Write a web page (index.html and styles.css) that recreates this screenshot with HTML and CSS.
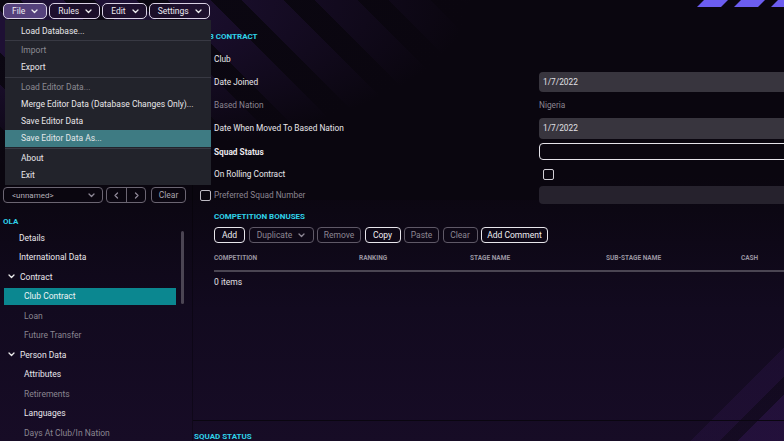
FILE: index.html
```html
<!DOCTYPE html>
<html lang="en">
<head>
<meta charset="utf-8">
<title>Editor - Club Contract</title>
<link rel="stylesheet" href="styles.css">
</head>
<body>
<div class="app">
  <header class="topbar">
    <nav class="menubar">
      <button class="mbtn active">File <svg class="chev" width="7" height="5" viewBox="0 0 7 5"><path d="M1 1l2.5 2.5L6 1"/></svg></button>
      <button class="mbtn">Rules <svg class="chev" width="7" height="5" viewBox="0 0 7 5"><path d="M1 1l2.5 2.5L6 1"/></svg></button>
      <button class="mbtn">Edit <svg class="chev" width="7" height="5" viewBox="0 0 7 5"><path d="M1 1l2.5 2.5L6 1"/></svg></button>
      <button class="mbtn">Settings <svg class="chev" width="7" height="5" viewBox="0 0 7 5"><path d="M1 1l2.5 2.5L6 1"/></svg></button>
    </nav>
    <svg class="stripes" width="87" height="8" viewBox="0 0 87 8">
      <polygon points="7,0 31,0 24,7 0,7"/>
      <polygon points="44,0 68,0 61,7 37,7"/>
      <polygon points="81,0 105,0 98,7 74,7"/>
    </svg>
  </header>

  <div class="dropdown">
    <div class="mi">Load Database...</div>
    <div class="sep first"></div>
    <div class="mi disabled">Import</div>
    <div class="mi">Export</div>
    <div class="sep"></div>
    <div class="mi disabled">Load Editor Data...</div>
    <div class="mi">Merge Editor Data (Database Changes Only)...</div>
    <div class="mi">Save Editor Data</div>
    <div class="mi hl">Save Editor Data As...</div>
    <div class="sep"></div>
    <div class="mi">About</div>
    <div class="mi">Exit</div>
  </div>

  <div class="main">
    <aside class="sidebar">
      <div class="selector">
        <div class="combo"><span>&lt;unnamed&gt;</span><svg class="chev dim" width="7" height="5" viewBox="0 0 7 5"><path d="M1 1l2.5 2.5L6 1"/></svg></div>
        <div class="navgroup">
          <span class="nb"><svg class="chev dim" width="5" height="7" viewBox="0 0 5 7"><path d="M3.5 1L1 3.5 3.5 6"/></svg></span>
          <span class="nb"><svg class="chev dim" width="5" height="7" viewBox="0 0 5 7"><path d="M1.5 1L4 3.5 1.5 6"/></svg></span>
        </div>
        <div class="sbtn">Clear</div>
      </div>
      <div class="person">OLA</div>
      <div class="treewrap">
        <ul class="tree">
          <li class="ti l1">Details</li>
          <li class="ti l1">International Data</li>
          <li class="ti l1 group"><svg class="chev" width="7" height="5" viewBox="0 0 7 5"><path d="M1 1l2.5 2.5L6 1"/></svg>Contract</li>
          <li class="ti l2 selected">Club Contract</li>
          <li class="ti l2 off">Loan</li>
          <li class="ti l2 off">Future Transfer</li>
          <li class="ti l1 group"><svg class="chev" width="7" height="5" viewBox="0 0 7 5"><path d="M1 1l2.5 2.5L6 1"/></svg>Person Data</li>
          <li class="ti l2">Attributes</li>
          <li class="ti l2 off">Retirements</li>
          <li class="ti l2">Languages</li>
          <li class="ti l2 off">Days At Club/In Nation</li>
        </ul>
        <div class="scroll"></div>
      </div>
    </aside>

    <section class="content">
      <div class="scrollarea">
        <h2 class="sec-title">CLUB CONTRACT</h2>
        <div class="form">
          <div class="row r1"><span class="lbl">Club</span><span class="val"></span></div>
          <div class="row r2"><span class="lbl">Date Joined</span><span class="field h20">1/7/2022</span></div>
          <div class="row r3"><span class="lbl off">Based Nation</span><span class="plain off">Nigeria</span></div>
          <div class="row r4"><span class="lbl">Date When Moved To Based Nation</span><span class="field h21">1/7/2022</span></div>
          <div class="row r5"><span class="lbl bold">Squad Status</span><span class="field outline"></span></div>
          <div class="row r6"><span class="lbl">On Rolling Contract</span><span class="cbwrap"><span class="cb"></span></span></div>
          <div class="row r7"><span class="lbl off"><span class="cb lead"></span>Preferred Squad Number</span><span class="field disabled"></span></div>
        </div>

        <h3 class="sub-title">COMPETITION BONUSES</h3>
        <div class="toolbar">
          <span class="tb on w-add">Add</span>
          <span class="tb w-dup">Duplicate <svg class="chev dim" width="7" height="5" viewBox="0 0 7 5"><path d="M1 1l2.5 2.5L6 1"/></svg></span>
          <span class="tb w-rem">Remove</span>
          <span class="tb on w-copy">Copy</span>
          <span class="tb w-paste">Paste</span>
          <span class="tb w-clear">Clear</span>
          <span class="tb on w-comment">Add Comment</span>
        </div>
        <div class="thead">
          <span>COMPETITION</span>
          <span>RANKING</span>
          <span>STAGE NAME</span>
          <span>SUB-STAGE NAME</span>
          <span>CASH</span>
        </div>
        <div class="tline"></div>
        <div class="items">0 items</div>
      </div>
      <div class="squad"><h2 class="sec-title">SQUAD STATUS</h2></div>
    </section>
  </div>
</div>
</body>
</html>
```

FILE: styles.css
```css
* { box-sizing: border-box; }
html, body { margin: 0; padding: 0; }
body {
  width: 784px;
  height: 441px;
  overflow: hidden;
  font-family: Roboto, "Liberation Sans", sans-serif;
  font-size: 8.5px;
  color: #e9e7ec;
}
ul { margin: 0; padding: 0; list-style: none; }
h2, h3 { margin: 0; }

.app {
  position: relative;
  width: 784px;
  height: 441px;
  overflow: hidden;
  background:
    radial-gradient(ellipse 470px 165px at 0 0, rgba(10,6,15,0) 30%, #0a060f 100%) 0 0 / 560px 200px no-repeat,
    repeating-linear-gradient(45deg, #1e1034 0 30px, #0b0712 30px 52px) 0 0 / 560px 200px no-repeat,
    linear-gradient(135deg, rgba(0,0,0,0) 0 74%, rgba(44,20,74,0.35) 74% 82%, rgba(10,6,16,0.15) 82% 87%, rgba(50,22,84,0.45) 87%) 100% 100% / 240px 120px no-repeat,
    linear-gradient(180deg, #0a060f 0%, #0a060f 40%, #120a1f 70%, #170c26 100%);
}

/* ---------- top bar ---------- */
.topbar {
  display: flex;
  align-items: flex-start;
  height: 20px;
}
.menubar {
  display: flex;
  gap: 2px;
  padding: 3px 0 0 3px;
}
.mbtn {
  height: 16px;
  display: flex;
  align-items: center;
  gap: 6px;
  padding: 0 7px 0 8px;
  border: 1px solid #d9d1e4;
  border-radius: 5px;
  background: rgba(30,17,46,0.85);
  color: #ece9f0;
  font-family: inherit;
  font-size: 8.5px;
}
.mbtn.active { background: #55417c; padding-right: 8px; }
.chev { fill: none; stroke: #eeeeee; stroke-width: 1.3; stroke-linecap: round; stroke-linejoin: round; flex: none; }
.chev.dim { stroke: #8e8896; }
.stripes { margin-left: auto; fill: #6c5df0; }

/* ---------- dropdown ---------- */
.dropdown {
  position: absolute;
  left: 5px;
  top: 20px;
  width: 206px;
  padding: 2.5px 0 1.5px;
  background: #22232b;
  z-index: 5;
}
.mi {
  height: 17px;
  line-height: 17px;
  padding-left: 16px;
  color: #e8e7ea;
  white-space: nowrap;
}
.mi.disabled { color: #8c8a92; }
.mi.hl { background: #3e7b83; color: #e4e8ea; }
.sep { height: 3px; display: flex; align-items: center; }
.sep.first { height: 2px; }
.sep::before { content: ""; display: block; width: 100%; height: 1px; background: #383943; }

/* ---------- main ---------- */
.main {
  display: flex;
  height: 421px;
}
.sidebar {
  width: 193px;
  flex: none;
  border-right: 1px solid rgba(0,0,0,0.3);
  overflow: hidden;
}
.selector {
  display: flex;
  align-items: center;
  margin: 167px 0 0 3px;
  height: 16px;
}
.combo {
  width: 100px;
  height: 16px;
  display: flex;
  align-items: center;
  justify-content: space-between;
  padding: 0 7px 0 8px;
  border: 1px solid #6b6572;
  border-radius: 4px;
  color: #b3aeb8;
  font-size: 8px;
}
.navgroup {
  display: flex;
  margin-left: 3px;
  height: 16px;
  border: 1px solid #6b6572;
  border-radius: 4px;
}
.nb {
  width: 19px;
  display: flex;
  align-items: center;
  justify-content: center;
}
.nb + .nb { border-left: 1px solid #6b6572; }
.sbtn {
  margin-left: 5px;
  width: 35px;
  height: 16px;
  display: flex;
  align-items: center;
  justify-content: center;
  border: 1px solid #6b6572;
  border-radius: 4px;
  color: #a9a4ae;
}
.person {
  margin: 9px 0 0 3px;
  height: 16px;
  line-height: 19px;
  color: #30d2ea;
  font-weight: 700;
  font-size: 8px;
}
.treewrap {
  display: flex;
  align-items: flex-start;
}
.tree { width: 176px; flex: none; }
.ti {
  height: 19.5px;
  display: flex;
  align-items: center;
  color: #e9e7ec;
  white-space: nowrap;
}
.ti.l1 { padding-left: 19px; }
.ti.l2 { padding-left: 24px; }
.ti.group { padding-left: 8px; gap: 5px; }
.ti.off { color: #8a8590; }
.ti.selected {
  margin: 1px 0 1px 4px;
  height: 17.5px;
  padding-left: 20px;
  background: #0b8790;
  color: #eef4f5;
}
.scroll {
  width: 3px;
  height: 73px;
  margin: 3px 0 0 5px;
  border-radius: 2px;
  background: #4b4553;
}

/* ---------- content ---------- */
.content {
  flex: 1;
  display: flex;
  flex-direction: column;
  overflow: hidden;
}
.scrollarea {
  flex: 1;
  padding-left: 21px;
}
.sec-title {
  color: #2fd3ea;
  font-weight: 700;
  font-size: 8px;
  line-height: 12px;
}
.scrollarea > .sec-title { margin: 11px 0 0 -20px; }
.form { margin-top: 4px; font-size: 8.3px; }
.row {
  display: grid;
  grid-template-columns: 325px 1fr;
  align-items: center;
}
.r1 { height: 23px; }
.r2 { height: 23px; }
.r3 { height: 23px; }
.r4 { height: 24px; }
.r5 { height: 23px; }
.r6 { height: 22px; }
.r7 { height: 20px; }
.lbl { display: flex; align-items: center; white-space: nowrap; }
.lbl.bold { font-weight: 700; }
.off { color: #8a8590; }
.field {
  display: flex;
  align-items: center;
  margin-right: -12px;
  padding-left: 4px;
  border-radius: 4px;
  background: #38353e;
  color: #e2e0e5;
}
.h20 { height: 20px; margin-top: 1px; }
.h21 { height: 21px; }
.field.outline { height: 17px; background: transparent; border: 1.5px solid #e6e4ea; }
.field.disabled { height: 18px; background: #26222d; }
.plain { padding-left: 0; }
.cbwrap { display: flex; padding-left: 4px; }
.cb {
  width: 11px;
  height: 11px;
  border: 1.3px solid #d2cfd6;
  border-radius: 2px;
  flex: none;
}
.cb.lead { margin: 0 3px 0 -14px; border-color: #bdb9c2; }

.sub-title {
  margin-top: 6px;
  color: #2fd3ea;
  font-weight: 700;
  font-size: 8px;
  line-height: 12px;
}
.toolbar {
  display: flex;
  gap: 3.5px;
  margin-top: 4px;
  height: 16px;
}
.tb {
  height: 16px;
  display: flex;
  align-items: center;
  justify-content: center;
  gap: 6px;
  border: 1px solid #5f5967;
  border-radius: 4px;
  color: #8c8692;
  white-space: nowrap;
}
.tb.on { border: 1.5px solid #e8e6ec; color: #f0eef2; }
.w-add { width: 31px; }
.w-dup { width: 65px; }
.w-rem { width: 44px; }
.w-copy { width: 36px; }
.w-paste { width: 35px; }
.w-clear { width: 35px; }
.w-comment { width: 67px; }

.thead {
  display: grid;
  grid-template-columns: 145px 111px 136px 135px 1fr;
  margin-top: 8px;
  height: 14px;
  align-items: center;
  color: #9a95a0;
  font-weight: 700;
  font-size: 6.5px;
}
.tline {
  margin-top: 5px;
  height: 2px;
  background: #4a4552;
}
.items {
  margin-top: 4px;
  line-height: 12px;
  color: #e2e0e5;
}
.squad {
  height: 21px;
  border-top: 1px solid #0a0610;
  padding: 10px 0 0 1px;
}
```
